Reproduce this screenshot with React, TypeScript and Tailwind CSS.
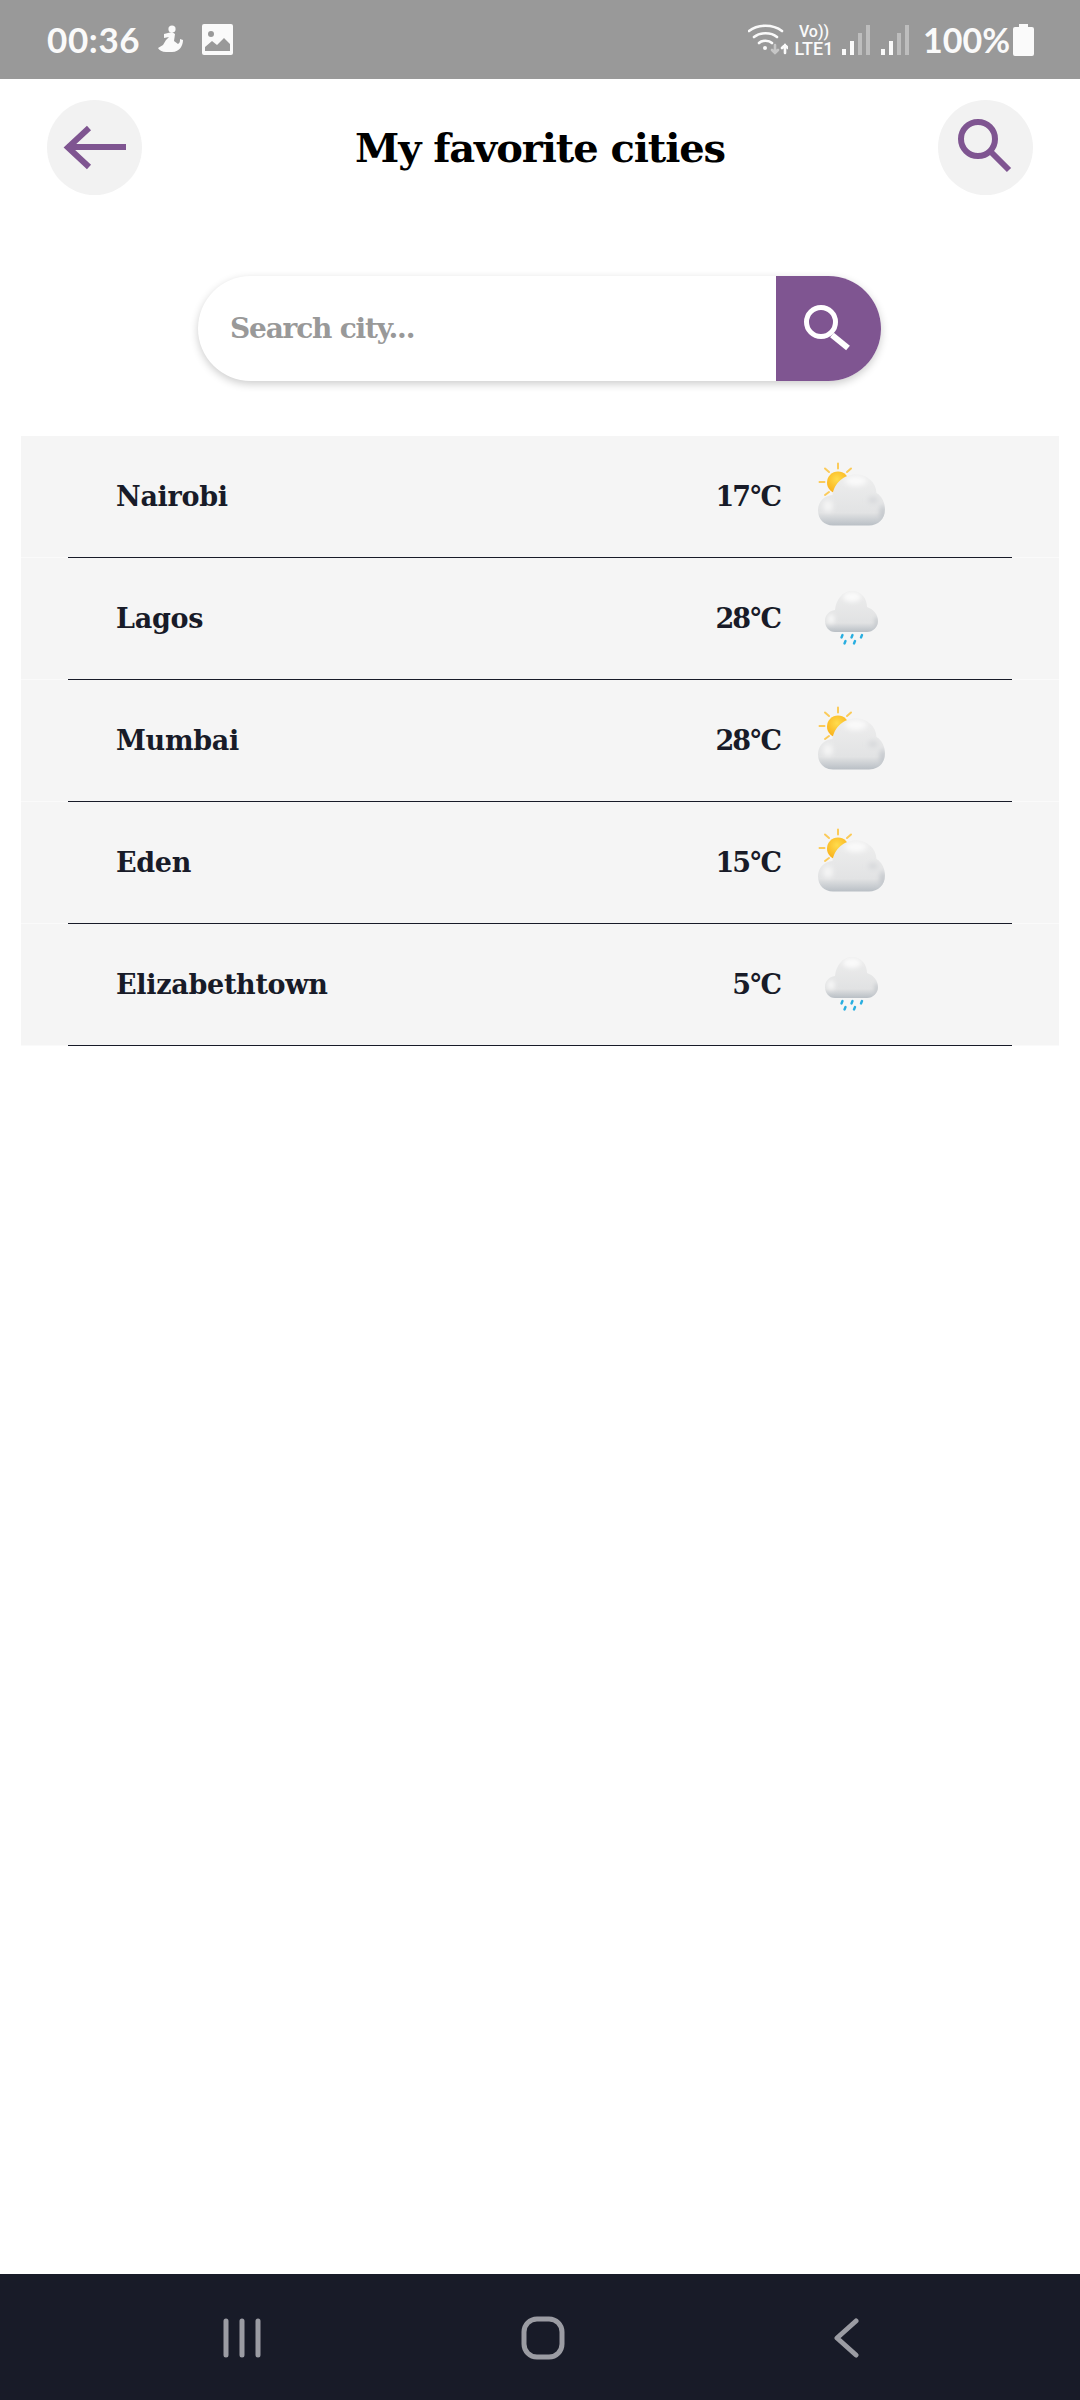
const serif = { fontFamily: '"DejaVu Serif", "Liberation Serif", serif' };

const cities = [
  { name: 'Nairobi', temp: '17°C', icon: 'sun' },
  { name: 'Lagos', temp: '28°C', icon: 'rain' },
  { name: 'Mumbai', temp: '28°C', icon: 'sun' },
  { name: 'Eden', temp: '15°C', icon: 'sun' },
  { name: 'Elizabethtown', temp: '5°C', icon: 'rain' },
];

function SunCloud() {
  return (
    <svg viewBox="0 0 72 72" className="w-[72px] h-[72px]">
      <defs>
        <radialGradient id="sunFill" cx="0.45" cy="0.35" r="0.7">
          <stop offset="0" stopColor="#ffdc4d" />
          <stop offset="1" stopColor="#f9ab14" />
        </radialGradient>
        <linearGradient id="cloudA" x1="0" y1="0" x2="0" y2="1">
          <stop offset="0" stopColor="#eeeeee" />
          <stop offset="0.75" stopColor="#e2e3e4" />
          <stop offset="1" stopColor="#b9bfc5" />
        </linearGradient>
        <filter id="softA" x="-50%" y="-50%" width="200%" height="200%">
          <feGaussianBlur stdDeviation="2.500" />
        </filter>
        <clipPath id="clipA">
          <path d="M17 65.500C8 65.500 2 59 2 50.500C2 42 8 35.500 16.500 35C18 23 28 14.500 40 14.500C51 14.500 60 22 60.500 33C66 36 69 43 69 49.500C69 59 62 65.500 53 65.500Z" />
        </clipPath>
      </defs>
      <g stroke="#fbcb5a" strokeWidth="2" strokeLinecap="round">
        <path d="M22 3.500v5M9 8.500l4 3.500M35 8.500l-4 3.500M3.500 22h5M9 35l4-3" />
      </g>
      <circle cx="22" cy="22.500" r="11" fill="url(#sunFill)" />
      <path
        d="M17 65.500C8 65.500 2 59 2 50.500C2 42 8 35.500 16.500 35C18 23 28 14.500 40 14.500C51 14.500 60 22 60.500 33C66 36 69 43 69 49.500C69 59 62 65.500 53 65.500Z"
        fill="url(#cloudA)"
      />
      <g clipPath="url(#clipA)">
        <g filter="url(#softA)">
          <ellipse cx="40" cy="21" rx="11" ry="5" fill="#fafafa" />
          <ellipse cx="12" cy="46" rx="5" ry="6" fill="#f5f5f5" />
          <ellipse cx="57" cy="40" rx="5" ry="3" fill="#d5d7da" />
          <ellipse cx="67" cy="54" rx="3" ry="9" fill="#c1c5ca" />
        </g>
      </g>
    </svg>
  );
}

function RainCloud() {
  return (
    <svg viewBox="0 0 72 72" className="w-[72px] h-[72px]">
      <defs>
        <linearGradient id="cloudB" x1="0" y1="0" x2="0" y2="1">
          <stop offset="0" stopColor="#ededed" />
          <stop offset="0.78" stopColor="#e1e2e3" />
          <stop offset="1" stopColor="#b9bfc5" />
        </linearGradient>
        <filter id="softB" x="-50%" y="-50%" width="200%" height="200%">
          <feGaussianBlur stdDeviation="2" />
        </filter>
        <clipPath id="clipB">
          <path d="M19 50C13 50 9 45 9 39C9 33 13 29 19 28C20 17 27 9 36 9C45 9 51 16 51 25C57 27 62 32 62 39C62 45 57 50 51 50Z" />
        </clipPath>
      </defs>
      <path
        d="M19 50C13 50 9 45 9 39C9 33 13 29 19 28C20 17 27 9 36 9C45 9 51 16 51 25C57 27 62 32 62 39C62 45 57 50 51 50Z"
        fill="url(#cloudB)"
      />
      <g clipPath="url(#clipB)">
        <g filter="url(#softB)">
          <ellipse cx="36" cy="15" rx="9" ry="5" fill="#fafafa" />
          <ellipse cx="15" cy="37" rx="4" ry="5" fill="#f5f5f5" />
          <ellipse cx="61" cy="42" rx="2.500" ry="7" fill="#c4c8cc" />
        </g>
      </g>
      <g stroke="#29aee0" strokeWidth="2.400" strokeLinecap="round">
        <path d="M26.500 53l-1 2.500M36.500 53l-1 2.500M46 53l-1 2.500M29.500 59l-1 2.500M39 59l-1 2.500" />
      </g>
    </svg>
  );
}

function StatusBar() {
  return (
    <div className="h-[79px] bg-[#999999] flex items-center justify-between pl-[47px] pr-[46px] text-[#fafafa] shrink-0">
      <div className="flex items-center">
        <span className="text-[35px] font-bold leading-none w-[97px] tracking-[0.6px]" style={{ fontFamily: 'Lato, sans-serif' }}>
          00:36
        </span>
        <svg viewBox="0 0 26 30" className="w-[26px] h-[30px] ml-[14px]" fill="#fafafa">
          <circle cx="14" cy="4" r="3.600" />
          <path d="M6 9l8-2 3 2-1 7 4 3c2-1 2-3 2-5l3 1c0 5-3 12-11 12H8c-4 0-7-2-8-4l5-3 3-5 3-3-5 1z" />
        </svg>
        <svg viewBox="0 0 31 31" className="w-[31px] h-[31px] ml-[18px]">
          <rect width="31" height="31" rx="2" fill="#fafafa" />
          <circle cx="9" cy="10" r="3" fill="#999999" />
          <path d="M3 27v-4l7-6 5 4 7-7 6 6v7z" fill="#999999" />
        </svg>
      </div>
      <div className="flex items-center">
        <svg viewBox="0 0 40 32" className="w-[40px] h-[32px]" fill="none" stroke="#fafafa" strokeLinecap="round" strokeWidth="2.600">
          <path d="M1 7c9-7 24-7 33 0M6 13c6-5 17-5 23 0M11 19c3-3 10-3 13 0" />
          <circle cx="17" cy="24" r="2" fill="#fafafa" stroke="none" />
          <path d="M27 21v8M24 26l3 3 3-3" stroke="#c6c6c6" />
          <path d="M37 29v-8M34 24l3-3 3 3" />
        </svg>
        <div className="w-[38px] ml-[7px] flex flex-col items-center font-medium leading-none" style={{ fontFamily: 'Roboto, sans-serif' }}>
          <span className="text-[16px] h-[16px]">Vo))</span>
          <span className="text-[18px] h-[16px]">LTE1</span>
        </div>
        <svg viewBox="0 0 28 30" className="w-[28px] h-[30px] ml-[9px]">
          <rect y="24" width="4" height="6" fill="#fafafa" />
          <rect x="8" y="16" width="4" height="14" fill="#fafafa" />
          <rect x="16" y="8" width="4" height="22" fill="#bdbdbd" />
          <rect x="24" width="4" height="30" fill="#bdbdbd" />
        </svg>
        <svg viewBox="0 0 28 30" className="w-[28px] h-[30px] ml-[11px]">
          <rect y="24" width="4" height="6" fill="#fafafa" />
          <rect x="8" y="16" width="4" height="14" fill="#fafafa" />
          <rect x="16" y="8" width="4" height="22" fill="#bdbdbd" />
          <rect x="24" width="4" height="30" fill="#bdbdbd" />
        </svg>
        <span className="text-[34px] font-bold leading-none ml-[14px] w-[90px]" style={{ fontFamily: 'Lato, sans-serif' }}>
          100%
        </span>
        <svg viewBox="0 0 21 32" className="w-[21px] h-[32px]">
          <path d="M6 0h9v3h4a2 2 0 0 1 2 2v25a2 2 0 0 1-2 2H2a2 2 0 0 1-2-2V5a2 2 0 0 1 2-2h4z" fill="#fafafa" />
        </svg>
      </div>
    </div>
  );
}

export default function App() {
  return (
    <div className="h-[2400px] bg-white flex flex-col overflow-hidden" style={serif}>
      <StatusBar />

      {/* Header */}
      <div className="mt-[21px] px-[47px] flex items-center justify-between">
        <button className="w-[95px] h-[95px] rounded-full bg-[#f2f2f2]">
          <svg viewBox="0 0 95 95" className="w-full h-full" fill="none" stroke="#7f5591" strokeWidth="6">
            <path d="M79 47H20M42 28L21 47.500L42 67" />
          </svg>
        </button>
        <h1 className="text-[40px] font-bold text-black tracking-[-1.1px] leading-none">My favorite cities</h1>
        <button className="w-[95px] h-[95px] rounded-full bg-[#f2f2f2]">
          <svg viewBox="0 0 95 95" className="w-full h-full" fill="none" stroke="#7f5591" strokeWidth="6">
            <circle cx="40" cy="39" r="17" />
            <path d="M53 52L71 70" />
          </svg>
        </button>
      </div>

      {/* Search */}
      <div className="mt-[81px] ml-[198px] w-[683px] h-[105px] rounded-full bg-white flex items-center shadow-[0_3px_8px_rgba(0,0,0,0.2)]">
        <span className="flex-1 pl-[32px] text-[#999999] text-[28px] font-bold tracking-[-1.2px]">Search city...</span>
        <button className="w-[105px] h-[105px] bg-[#7f5591] rounded-r-full">
          <svg viewBox="0 0 105 105" className="w-full h-full" fill="none" stroke="#ffffff" strokeWidth="5">
            <circle cx="45" cy="46" r="14.500" />
            <path d="M56 59L72 72" strokeWidth="6" />
          </svg>
        </button>
      </div>

      {/* City list */}
      <div className="mt-[55px] mx-[21px]">
        {cities.map((city) => (
          <div key={city.name} className="h-[122px] bg-[#f5f5f5] px-[47px] border-b border-[#fafafa]">
            <div className="h-[122px] flex items-center border-b border-[#181b28] text-[#181b28] text-[27px] font-bold pt-[2px]">
              <span className="flex-1 pl-[48px] tracking-[-0.3px]">{city.name}</span>
              <span className="tracking-[-2px]">{city.temp}</span>
              <span className="w-[232px] pl-[36px] pb-[4px]">
                {city.icon === 'sun' ? <SunCloud /> : <RainCloud />}
              </span>
            </div>
          </div>
        ))}
      </div>

      <div className="flex-1" />

      {/* Android nav bar */}
      <div className="h-[126px] bg-[#181b28] shrink-0 flex items-center pl-[222px] pt-[2px]">
        <svg viewBox="0 0 40 40" className="w-[40px] h-[40px]" stroke="#9b9ca3" strokeWidth="5" strokeLinecap="round">
          <path d="M4 3v34M20 3v34M36 3v34" />
        </svg>
        <svg viewBox="0 0 44 44" className="w-[44px] h-[44px] ml-[259px]" fill="none" stroke="#9b9ca3" strokeWidth="5">
          <rect x="3" y="3" width="38" height="38" rx="13" />
        </svg>
        <svg viewBox="0 0 26 40" className="w-[26px] h-[40px] ml-[268px]" fill="none" stroke="#9b9ca3" strokeWidth="5" strokeLinecap="round" strokeLinejoin="round">
          <path d="M23 3L4 20L23 37" />
        </svg>
      </div>
    </div>
  );
}
